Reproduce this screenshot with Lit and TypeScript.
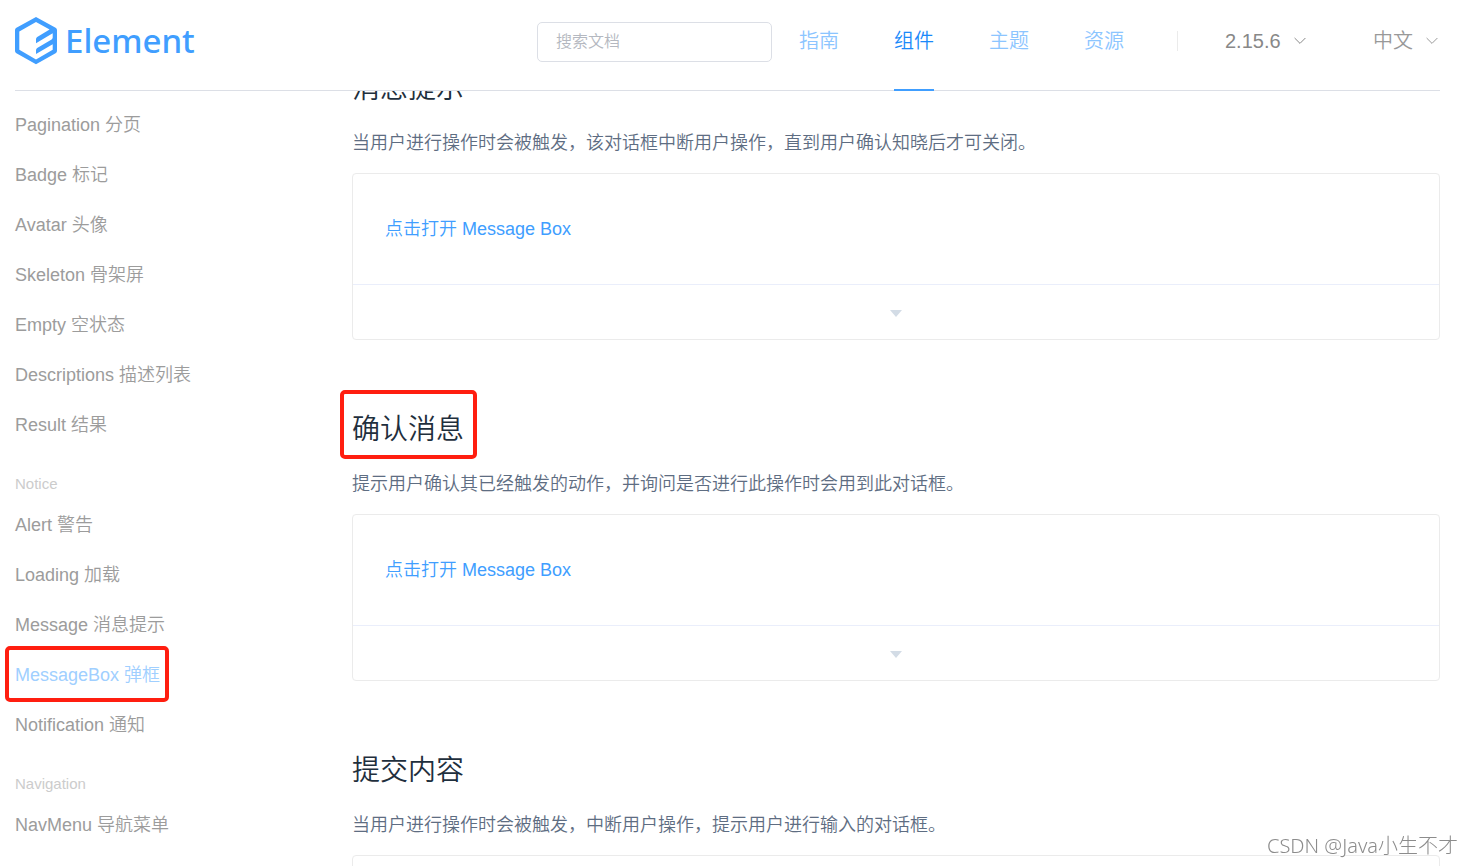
import { LitElement, html, css, nothing } from "lit";
import { customElement, state } from "lit/decorators.js";

interface Section {
  title: string;
  text: string;
  marked?: boolean;
}

const NAV = ["指南", "组件", "主题", "资源"];

const GROUPS: { label?: string; items: string[] }[] = [
  {
    items: [
      "Pagination 分页",
      "Badge 标记",
      "Avatar 头像",
      "Skeleton 骨架屏",
      "Empty 空状态",
      "Descriptions 描述列表",
      "Result 结果",
    ],
  },
  {
    label: "Notice",
    items: ["Alert 警告", "Loading 加载", "Message 消息提示", "MessageBox 弹框", "Notification 通知"],
  },
  { label: "Navigation", items: ["NavMenu 导航菜单"] },
];

const SECTIONS: Section[] = [
  { title: "消息提示", text: "当用户进行操作时会被触发，该对话框中断用户操作，直到用户确认知晓后才可关闭。" },
  { title: "确认消息", text: "提示用户确认其已经触发的动作，并询问是否进行此操作时会用到此对话框。", marked: true },
  { title: "提交内容", text: "当用户进行操作时会被触发，中断用户操作，提示用户进行输入的对话框。" },
];

const FONT = css`"Liberation Sans", Arial, "Noto Sans CJK SC", sans-serif`;

@customElement("site-header")
export class SiteHeader extends LitElement {
  static styles = css`
    :host {
      display: block;
      background: #fff;
    }
    .bar {
      display: flex;
      height: 90px;
      margin: 0 32px 0 15px;
      border-bottom: 1px solid #dcdfe6;
      line-height: 82px;
      font-size: 20px;
    }
    .logo {
      display: flex;
      align-items: center;
      gap: 8px;
      height: 82px;
      color: #409eff;
      text-decoration: none;
      font: 500 33px/82px "Noto Sans", sans-serif;
    }
    .tools {
      display: flex;
      margin-left: auto;
    }
    .search {
      box-sizing: border-box;
      width: 235px;
      height: 40px;
      margin: 22px 27px 0 0;
      padding: 0 18px;
      border: 1px solid #dcdfe6;
      border-radius: 5px;
      outline: none;
      background: #fff;
      font: 350 16px/38px ${FONT};
      color: #606266;
    }
    .search::placeholder {
      color: #b4b8c0;
      opacity: 1;
    }
    .nav {
      display: flex;
      gap: 55px;
    }
    .link {
      height: 81px;
      padding-bottom: 8px;
      border-bottom: 2px solid transparent;
      line-height: 83px;
      color: #8cc5ff;
      text-decoration: none;
      white-space: nowrap;
    }
    .link.active {
      border-color: #409eff;
      color: #1989fa;
    }
    .divider {
      width: 1px;
      height: 20px;
      margin: 31px 47px 0 53px;
      background: #ebebeb;
    }
    .picker {
      display: flex;
      align-items: center;
      gap: 13px;
      height: 82px;
      color: #888;
    }
    .picker + .picker {
      margin: 0 2px 0 67px;
      color: #999;
    }
    .select {
      appearance: none;
      margin: 0;
      padding: 0;
      border: 0;
      outline: none;
      background: none;
      color: inherit;
      font: inherit;
      line-height: 30px;
      cursor: pointer;
    }
  `;

  render() {
    const chevron = html`<svg width="12" height="8" viewBox="0 0 12 8" fill="none" stroke="currentColor" aria-hidden="true">
      <path d="M.6 1 6 6.4 11.4 1" />
    </svg>`;
    return html`
      <header class="bar">
        <a class="logo" href="#/">
          <svg width="42" height="48" viewBox="0 0 42 48" fill="currentColor" aria-hidden="true">
            <path
              fill-rule="evenodd"
              d="M21 0 40.6 10.8Q42 11.6 42 13V34Q42 35.4 40.6 36.2L21 47.2 1.4 36.2Q0 35.4 0 34V13Q0 11.6 1.4 10.8ZM21 5 4.3 14.6V32.8L21 42.4 37.7 32.8V27.2L21 37V33.2Q21 31.8 22.2 31L36.6 22.4Q37.7 21.7 37.7 20.6V16.2L21 26.2V22.2Q21 20.8 22.2 20L34.6 12.6Z"
            />
          </svg>
          <span>Element</span>
        </a>
        <div class="tools">
          <input class="search" type="search" placeholder="搜索文档" aria-label="搜索文档" />
          <nav class="nav">
            ${NAV.map((n) => html`<a class="link ${n === "组件" ? "active" : ""}" href="#/${n}">${n}</a>`)}
          </nav>
          <span class="divider"></span>
          <label class="picker">
            <select class="select" aria-label="版本"><option>2.15.6</option></select>${chevron}
          </label>
          <label class="picker">
            <select class="select" aria-label="语言"><option>中文</option></select>${chevron}
          </label>
        </div>
      </header>
    `;
  }
}

@customElement("side-nav")
export class SideNav extends LitElement {
  static styles = css`
    :host {
      display: block;
    }
    .list {
      margin: 0;
      padding: 0;
      list-style: none;
    }
    .label {
      margin-top: 18px;
      font-size: 15px;
      line-height: 32px;
      color: #ccc;
    }
    .item {
      line-height: 50px;
      height: 50px;
      white-space: nowrap;
    }
    .link {
      display: inline-block;
      color: #9c9c9c;
      text-decoration: none;
    }
    .link.active {
      position: relative;
      color: #a0cfff;
    }
    .link.active::after {
      content: "";
      position: absolute;
      inset: -4px -9px -2px -10px;
      border: 4px solid #ff1e10;
      border-radius: 5px;
      pointer-events: none;
    }
  `;

  render() {
    return html`<nav>
      ${GROUPS.map(
        (g) => html`
          ${g.label ? html`<div class="label">${g.label}</div>` : nothing}
          <ul class="list">
            ${g.items.map((i) => {
              const name = i.split(" ")[0];
              return html`<li class="item">
                <a class="link ${name === "MessageBox" ? "active" : ""}" href="#/${name}">${i}</a>
              </li>`;
            })}
          </ul>
        `
      )}
    </nav>`;
  }
}

@customElement("demo-block")
export class DemoBlock extends LitElement {
  static styles = css`
    :host {
      display: block;
      border: 1px solid #ebebeb;
      border-radius: 4px;
    }
    .source {
      display: flex;
      align-items: center;
      height: 110px;
      padding: 0 32px;
    }
    .open {
      padding: 0;
      border: 0;
      background: none;
      color: #409eff;
      font: inherit;
      line-height: 24px;
      cursor: pointer;
    }
    .control {
      display: flex;
      align-items: center;
      justify-content: center;
      width: 100%;
      height: 55px;
      padding: 2px 0 0;
      border: 0;
      border-top: 1px solid #eaeefb;
      background: none;
      color: #d3dce6;
      cursor: pointer;
    }
  `;

  @state() private expanded = false;

  render() {
    return html`
      <div class="source"><button class="open" type="button">点击打开 Message Box</button></div>
      <button
        class="control"
        type="button"
        aria-label="显示代码"
        aria-expanded=${this.expanded}
        @click=${() => (this.expanded = !this.expanded)}
      >
        <svg width="12" height="7" viewBox="0 0 12 7" fill="currentColor" aria-hidden="true">
          <path d="M0 0H12L6 7Z" />
        </svg>
      </button>
    `;
  }
}

@customElement("app-root")
export class AppRoot extends LitElement {
  static styles = css`
    :host {
      display: flex;
      flex-direction: column;
      height: 100vh;
      overflow: hidden;
      background: #fff;
      font: 350 18px/24px ${FONT};
    }
    .main {
      display: grid;
      grid-template-columns: 300px minmax(0, 1fr);
      column-gap: 37px;
      flex: 1;
      min-height: 0;
      padding: 0 32px 0 15px;
      overflow: hidden;
    }
    .side {
      margin-top: 9px;
    }
    .content {
      margin-top: -22px;
    }
    .section {
      margin-bottom: 70px;
    }
    .title {
      width: fit-content;
      margin: 0 0 16px;
      font-size: 28px;
      font-weight: 350;
      line-height: 40px;
      color: #1f2f3d;
    }
    .title.marked {
      position: relative;
    }
    .title.marked::after {
      content: "";
      position: absolute;
      inset: -20px -13px -9px -12px;
      border: 4px solid #ff1e10;
      border-radius: 5px;
      pointer-events: none;
    }
    .text {
      margin: 0 0 12px;
      line-height: 36px;
      color: #5e6d82;
    }
    .watermark {
      position: fixed;
      right: 14px;
      bottom: 6px;
      font: 300 20px/28px "Noto Sans", "Noto Sans CJK SC", sans-serif;
      color: #8c8c8c;
      text-shadow: -1px -1px 0 #fff;
    }
  `;

  render() {
    return html`
      <site-header></site-header>
      <div class="main">
        <side-nav class="side"></side-nav>
        <main class="content">
          ${SECTIONS.map(
            (s) => html`<section class="section">
              <h3 class="title ${s.marked ? "marked" : ""}">${s.title}</h3>
              <p class="text">${s.text}</p>
              <demo-block></demo-block>
            </section>`
          )}
        </main>
      </div>
      <div class="watermark">CSDN @Java小生不才</div>
    `;
  }
}
